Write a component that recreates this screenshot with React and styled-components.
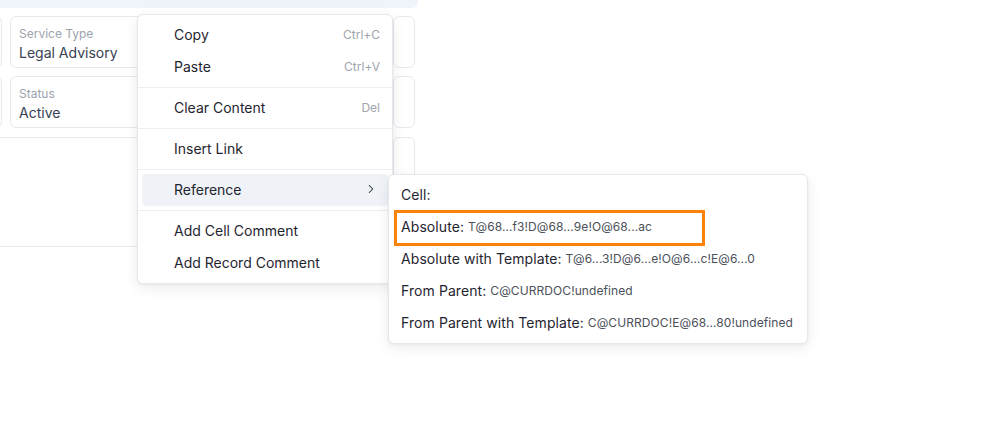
import React from "react";
import styled, { createGlobalStyle } from "styled-components";
import { ChevronRight } from "lucide-react";

const Global = createGlobalStyle`
  html, body { margin: 0; padding: 0; background: #ffffff; }
  body { font-family: Inter, "Noto Sans", Arial, sans-serif; -webkit-font-smoothing: antialiased; }
  * { box-sizing: border-box; }
`;

const Stage = styled.div`
  position: relative;
  width: 1001px;
  height: 422px;
  overflow: hidden;
  background: #ffffff;
`;

const Sheet = styled.div`
  width: 418px;
  overflow: hidden;
`;

const TopBar = styled.div`
  height: 8px;
  background: #eef4fa;
  border-bottom-right-radius: 6px;
`;

const FieldGrid = styled.div`
  display: grid;
  grid-template-columns: 172px 375px 22px;
  grid-template-rows: 52px 52px 111px;
  column-gap: 8px;
  row-gap: 8px;
  margin: 8px 0 0 -170px;
`;

const Card = styled.div`
  grid-column: ${(p) => p.$span || "auto"};
  margin-top: ${(p) => (p.$nudge ? "1px" : "0")};
  border: 1px solid #e7e9ed;
  border-radius: 6px;
  padding: 9px 8px 0 8px;
  display: flex;
  flex-direction: column;
  gap: 1px;
  background: #fff;
`;

const FieldLabel = styled.div`
  font-size: 12px;
  line-height: 16px;
  color: #9ca3af;
  white-space: nowrap;
`;

const FieldValue = styled.div`
  font-size: 14px;
  line-height: 20px;
  color: #374151;
  white-space: nowrap;
`;

const Menu = styled.div`
  position: absolute;
  left: ${(p) => p.$left}px;
  top: ${(p) => p.$top}px;
  width: ${(p) => (p.$width ? `${p.$width}px` : "max-content")};
  background: #ffffff;
  border: 1px solid #e6e8eb;
  border-radius: 6px;
  padding: 4px 0;
  box-shadow: 0 4px 14px rgba(17, 24, 39, 0.08), 0 1px 3px rgba(17, 24, 39, 0.05);
  z-index: ${(p) => p.$z || 1};
`;

const Item = styled.div`
  position: relative;
  display: flex;
  align-items: center;
  height: 32px;
  margin: 0 4px;
  padding: ${(p) => (p.$sub ? "0 10px 2px 8px" : "0 8px 2px 32px")};
  border-radius: 4px;
  background: ${(p) => (p.$active ? "#eff3f8" : "transparent")};
  color: #1f2530;
  font-size: 14px;
  letter-spacing: ${(p) => (p.$sub ? "0.08px" : "0")};
  white-space: nowrap;
`;

const ItemText = styled.span`
  flex: 1;
`;

const Shortcut = styled.span`
  font-size: 12px;
  color: #a0a5ad;
`;

const Separator = styled.div`
  height: 1px;
  background: #eceef1;
  margin: 4px 0;
`;

const Arrow = styled.span`
  display: flex;
  align-items: center;
  color: #2b3039;
  margin-right: 2px;
`;

const RefValue = styled.span`
  font-size: 12px;
  color: #4b5059;
  margin-left: 4px;
`;

const Annotation = styled.div`
  position: absolute;
  left: 1px;
  top: -1px;
  width: 311px;
  height: 36px;
  border: 3px solid #fb8205;
  pointer-events: none;
`;

const mainItems = [
  [{ label: "Copy", key: "Ctrl+C" }, { label: "Paste", key: "Ctrl+V" }],
  [{ label: "Clear Content", key: "Del" }],
  [{ label: "Insert Link" }],
  [{ label: "Reference", sub: true }],
  [{ label: "Add Cell Comment" }, { label: "Add Record Comment" }],
];

const refs = [
  { label: "Cell:", value: "" },
  { label: "Absolute:", value: "T@68...f3!D@68...9e!O@68...ac", marked: true },
  { label: "Absolute with Template:", value: "T@6...3!D@6...e!O@6...c!E@6...0" },
  { label: "From Parent:", value: "C@CURRDOC!undefined" },
  { label: "From Parent with Template:", value: "C@CURRDOC!E@68...80!undefined" },
];

export default function App() {
  return (
    <Stage>
      <Global />
      <Sheet>
        <TopBar />
        <FieldGrid>
          <Card />
          <Card>
            <FieldLabel>Service Type</FieldLabel>
            <FieldValue>Legal Advisory</FieldValue>
          </Card>
          <Card />
          <Card />
          <Card>
            <FieldLabel>Status</FieldLabel>
            <FieldValue>Active</FieldValue>
          </Card>
          <Card />
          <Card $span="1 / span 2" $nudge />
          <Card $nudge />
        </FieldGrid>
      </Sheet>

      <Menu $left={137} $top={14} $width={256} $z={1}>
        {mainItems.map((group, gi) => (
          <React.Fragment key={gi}>
            {gi > 0 && <Separator />}
            {group.map((it) => (
              <Item key={it.label} $active={it.sub}>
                <ItemText>{it.label}</ItemText>
                {it.key && <Shortcut>{it.key}</Shortcut>}
                {it.sub && (
                  <Arrow>
                    <ChevronRight size={14} strokeWidth={1.8} />
                  </Arrow>
                )}
              </Item>
            ))}
          </React.Fragment>
        ))}
      </Menu>

      <Menu $left={388} $top={174} $z={2}>
        {refs.map((r) => (
          <Item key={r.label} $sub>
            <span>{r.label}</span>
            {r.value && <RefValue>{r.value}</RefValue>}
            {r.marked && <Annotation />}
          </Item>
        ))}
      </Menu>
    </Stage>
  );
}
